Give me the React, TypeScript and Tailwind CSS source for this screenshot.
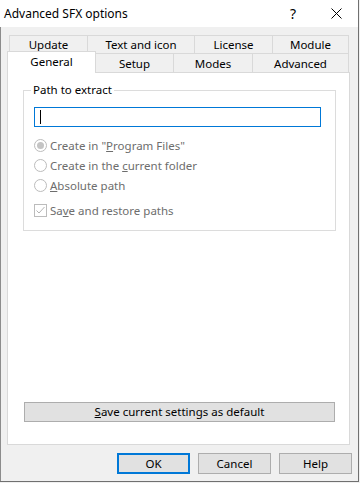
import React from 'react';

const rowOne = [
  { label: 'Update', w: 'w-[79px]' },
  { label: 'Text and icon', w: 'w-[107px]' },
  { label: 'License', w: 'w-[78px]' },
  { label: 'Module', w: 'w-[76px]' },
];

const rowTwo = [
  { label: 'Setup', w: 'w-[78px]' },
  { label: 'Modes', w: 'w-[79px]' },
  { label: 'Advanced', w: 'w-[96px]' },
];

function Radio({ checked, children }: { checked?: boolean; children: React.ReactNode }) {
  return (
    <div className="flex items-center h-[19px] gap-[3px]">
      <span className="w-[13px] h-[13px] rounded-full border border-[#bcbcbc] bg-white flex items-center justify-center">
        {checked && <span className="w-[7px] h-[7px] rounded-full bg-[#c4c4c4]" />}
      </span>
      <span className="text-[#6d6d6d]">{children}</span>
    </div>
  );
}

export default function App() {
  return (
    <div
      className="w-[360px] h-[483px] bg-[#f0f0f0] text-[11.5px] text-black overflow-hidden"
      style={{ fontFamily: '"Noto Sans", "Open Sans", sans-serif' }}
    >
      <div className="w-[359px] h-[482px] flex flex-col border-r border-b border-[#707070]">
        {/* title bar */}
        <div className="h-[27px] bg-white flex items-center pl-[4px] shrink-0">
          <span className="text-[12px] leading-none">Advanced SFX options</span>
          <span className="ml-auto mr-[35px] text-[14px] leading-none">?</span>
          <svg width="11" height="11" viewBox="0 0 11 11" className="mr-[16px]">
            <path d="M0.5 0.5 L10.5 10.5 M10.5 0.5 L0.5 10.5" stroke="#000" strokeWidth="1" />
          </svg>
        </div>

        <div className="flex-1 flex flex-col border-l border-[#8c8c8c]">
          {/* tabs, back row */}
          <div className="flex ml-[8px] mt-[8px] h-[18px]">
            {rowOne.map((t) => (
              <div
                key={t.label}
                className={`${t.w} h-[18px] border-t border-r border-[#d9d9d9] first:border-l flex items-center justify-center leading-none`}
              >
                {t.label}
              </div>
            ))}
          </div>

          {/* tabs, front row */}
          <div className="flex items-end ml-[6px] -mt-[2px] h-[22px]">
            <div className="relative z-10 w-[89px] h-[22px] bg-white border-x border-t border-[#d9d9d9] flex items-start justify-center pt-[4px] leading-none">
              General
            </div>
            {rowTwo.map((t) => (
              <div
                key={t.label}
                className={`${t.w} h-[20px] border-t border-r border-[#d9d9d9] flex items-center justify-center pt-[1px] leading-none`}
              >
                {t.label}
              </div>
            ))}
          </div>

          {/* panel */}
          <div className="ml-[6px] -mt-[1px] w-[343px] h-[373px] bg-white border border-[#d9d9d9] flex flex-col">
            <fieldset className="ml-[15px] mt-[9px] w-[313px] h-[149px] border border-[#dcdcdc] pl-[10px]">
              <legend className="ml-[-3px] px-[2px] leading-[16px]">Path to extract</legend>
              <div className="mt-[9px] w-[287px] h-[20px] border border-[#0078d7] flex items-center pl-[5px]">
                <span className="w-px h-[14px] bg-black" />
              </div>
              <div className="mt-[9px] flex flex-col gap-[1px]">
                <Radio checked>
                  Create in "<span className="underline">P</span>rogram Files"
                </Radio>
                <Radio>
                  Create in the <span className="underline">c</span>urrent folder
                </Radio>
                <Radio>
                  <span className="underline">A</span>bsolute path
                </Radio>
              </div>
              <div className="mt-[6px] flex items-center h-[19px] gap-[3px]">
                <span className="w-[13px] h-[13px] border border-[#bcbcbc] bg-white flex items-center justify-center">
                  <svg width="11" height="11" viewBox="0 0 11 11">
                    <path d="M1.5 5.5 L4 8 L9.5 2" stroke="#b4b4b4" strokeWidth="1" fill="none" />
                  </svg>
                </span>
                <span className="text-[#6d6d6d]">
                  Sa<span className="underline">v</span>e and restore paths
                </span>
              </div>
            </fieldset>

            <button className="mt-auto mb-[22px] ml-[16px] w-[311px] h-[20px] bg-[#e1e1e1] border border-[#adadad] leading-none">
              <span className="underline">S</span>ave current settings as default
            </button>
          </div>

          {/* dialog buttons */}
          <div className="flex justify-end gap-[8px] mt-[8px] mr-[6px]">
            <button className="w-[73px] h-[21px] bg-[#e1e1e1] border-2 border-[#0078d7] leading-none">OK</button>
            <button className="w-[73px] h-[21px] bg-[#e1e1e1] border border-[#adadad] leading-none">Cancel</button>
            <button className="w-[73px] h-[21px] bg-[#e1e1e1] border border-[#adadad] leading-none">Help</button>
          </div>
        </div>
      </div>
    </div>
  );
}
